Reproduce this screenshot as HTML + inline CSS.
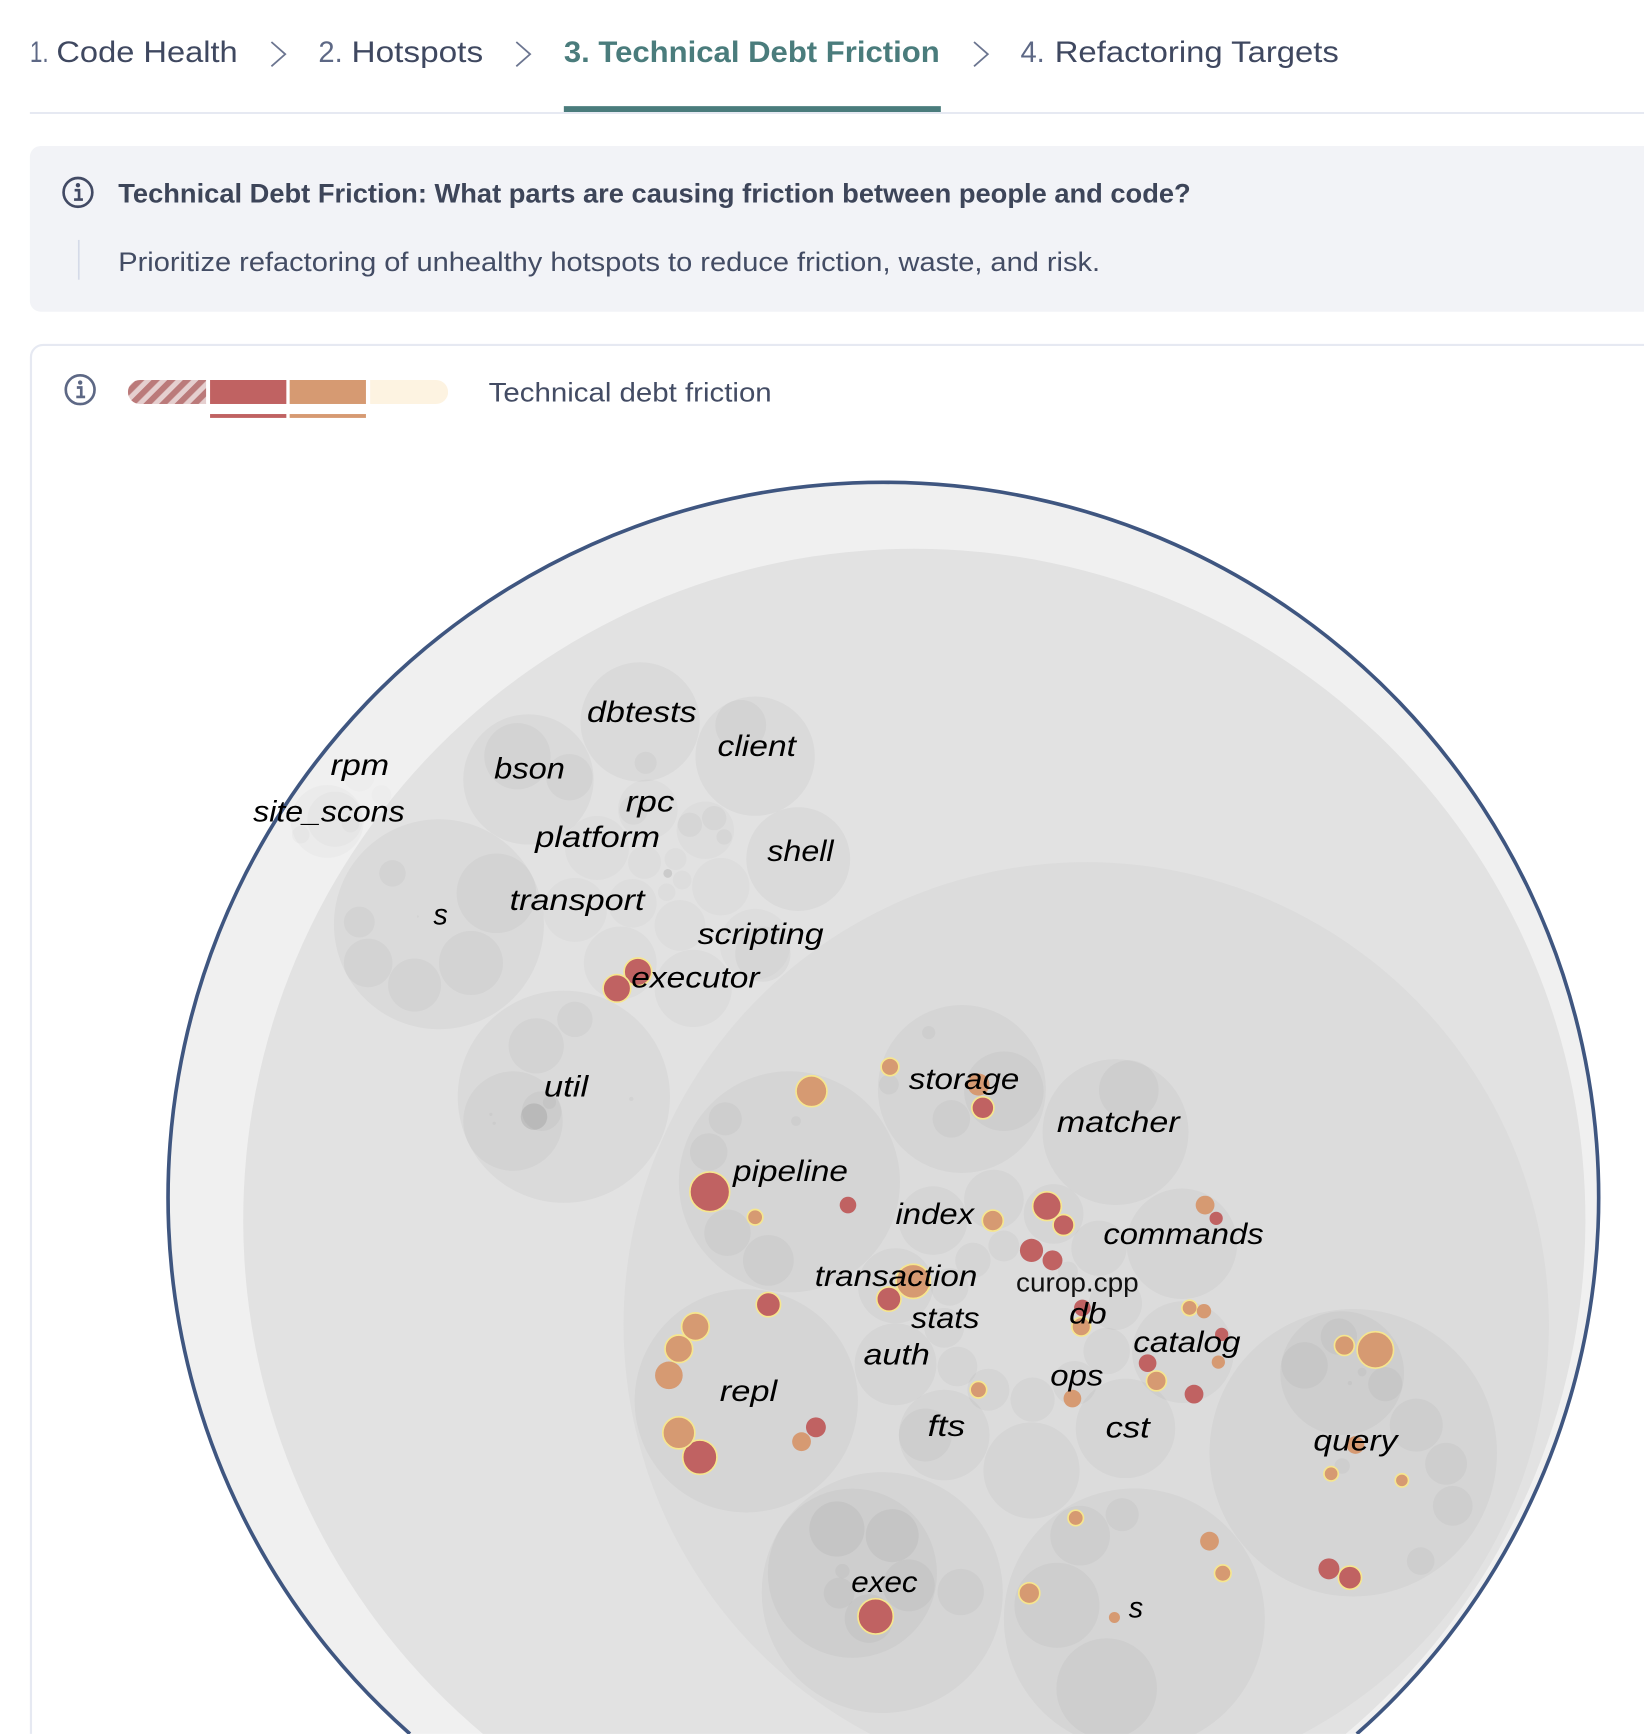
<!DOCTYPE html>
<html lang="en">
<head>
<meta charset="utf-8">
<title>Technical Debt Friction</title>
<style>
html,body{margin:0;padding:0;background:#fff;width:1644px;height:1734px;overflow:hidden}
svg{display:block}
text{font-family:"Liberation Sans",sans-serif}
.t{font-size:27px}
.b{font-size:24px}
.l text{font-size:27px;font-style:italic;fill:#000}
</style>
</head>
<body>
<svg xmlns="http://www.w3.org/2000/svg" width="1644" height="1734" viewBox="0 0 1487 1568.4">
<defs>
<pattern id="h" width="10" height="10" patternUnits="userSpaceOnUse" patternTransform="rotate(45)">
<rect width="10" height="10" fill="#e5cfcf"/><rect width="5.4" height="10" fill="#bb7a7a"/>
</pattern>
<clipPath id="pill"><rect x="115.7" y="343.7" width="289.6" height="21.7" rx="11"/></clipPath>
</defs>

<!-- tabs -->
<g class="t">
<text x="27" y="56" fill="#5d6885" textLength="17" lengthAdjust="spacingAndGlyphs">1.</text>
<text x="51" y="56" fill="#3f4860" textLength="164" lengthAdjust="spacingAndGlyphs">Code Health</text>
<text x="288" y="56" fill="#5d6885" textLength="22" lengthAdjust="spacingAndGlyphs">2.</text>
<text x="318" y="56" fill="#3f4860" textLength="119" lengthAdjust="spacingAndGlyphs">Hotspots</text>
<text x="510" y="56" fill="#4a7c7c" font-weight="700" textLength="340" lengthAdjust="spacingAndGlyphs">3. Technical Debt Friction</text>
<text x="923" y="56" fill="#5d6885" textLength="22" lengthAdjust="spacingAndGlyphs">4.</text>
<text x="954" y="56" fill="#3f4860" textLength="257" lengthAdjust="spacingAndGlyphs">Refactoring Targets</text>
</g>
<g fill="none" stroke="#6b7590" stroke-width="1.6">
<path d="M245.500 38 L258 49 L245.500 60"/>
<path d="M467 38 L479.500 49 L467 60"/>
<path d="M881 38 L893.500 49 L881 60"/>
</g>
<rect x="27" y="101.300" width="1460" height="1.800" fill="#e6e9f2"/>
<rect x="510" y="96" width="341" height="5.300" fill="#4a7c7c"/>

<!-- banner -->
<path d="M37 132H1487V282H37a10 10 0 0 1-10-10V142a10 10 0 0 1 10-10z" fill="#f2f3f7"/>
<circle cx="70.500" cy="174" r="13" fill="none" stroke="#424a64" stroke-width="2.400"/>
<circle cx="70.500" cy="167.500" r="2" fill="#424a64"/>
<path d="M67.500 172H71.500V180M67 180.500H75" fill="none" stroke="#424a64" stroke-width="2.400"/>
<rect x="70.500" y="217" width="1.500" height="36" fill="#d5dae8"/>
<text class="b" x="107" y="183" fill="#3d4559" font-weight="700" textLength="970" lengthAdjust="spacingAndGlyphs">Technical Debt Friction: What parts are causing friction between people and code?</text>
<text class="b" x="107" y="245" fill="#434c64" textLength="888" lengthAdjust="spacingAndGlyphs">Prioritize refactoring of unhealthy hotspots to reduce friction, waste, and risk.</text>

<!-- card -->
<path d="M1487 312H39a11 11 0 0 0-11 11V1568.300" fill="none" stroke="#e6e9f2" stroke-width="2"/>
<circle cx="72.500" cy="352.500" r="13" fill="none" stroke="#5d6885" stroke-width="2.400"/>
<circle cx="72.500" cy="346" r="2" fill="#5d6885"/>
<path d="M69.500 350.500H73.500V358.500M69 359H77" fill="none" stroke="#5d6885" stroke-width="2.400"/>
<g clip-path="url(#pill)">
<rect x="115.700" y="343.700" width="70.700" height="21.700" fill="url(#h)"/>
<rect x="190" y="343.700" width="69" height="21.700" fill="#c06262"/>
<rect x="262" y="343.700" width="69" height="21.700" fill="#d69a72"/>
<rect x="334.800" y="343.700" width="70.500" height="21.700" fill="#fdf3e1"/>
</g>
<rect x="190" y="374.500" width="69" height="3.500" fill="#c06262"/>
<rect x="262" y="374.500" width="69" height="3.500" fill="#d69a72"/>
<text class="b" x="442" y="363" fill="#434c64" textLength="256" lengthAdjust="spacingAndGlyphs">Technical debt friction</text>

<!-- pack -->
<path d="M370.800 1568.300A647 647 0 1 1 1227.200 1568.300Z" fill="#f0f0f0"/>
<path d="M370.800 1568.300A647 647 0 1 1 1227.200 1568.300" fill="none" stroke="#3f5680" stroke-width="3.300"/>
<path d="M436.800 1568.300A607 607 0 1 1 1217.200 1568.300Z" fill="#e2e2e2"/>
<path d="M786.900 1568.300A418.500 418.500 0 1 1 1178.100 1568.300Z" fill="#dcdcdc"/>

<g fill="#000" fill-opacity=".03">
<!-- upper-left -->
<circle cx="296" cy="743" r="33" fill-opacity=".02"/><circle cx="303" cy="741" r="25" fill-opacity=".02"/><circle cx="272" cy="755" r="8" fill-opacity=".02"/><circle cx="317" cy="745" r="8" fill-opacity=".02"/>
<circle cx="325" cy="702" r="14" fill-opacity=".01"/><circle cx="345" cy="719" r="9" fill-opacity=".01"/>
<circle cx="397" cy="836" r="95"/><circle cx="449" cy="808" r="36"/><circle cx="426" cy="871" r="29"/><circle cx="375" cy="891" r="24"/><circle cx="333" cy="871" r="22"/><circle cx="325" cy="834" r="14"/><circle cx="355" cy="790" r="12"/><circle cx="378" cy="829" r="1"/>
<circle cx="478" cy="705" r="59"/><circle cx="468" cy="684" r="30"/><circle cx="515" cy="703" r="21"/>
<circle cx="579" cy="653" r="54"/><circle cx="584" cy="690" r="10"/>
<circle cx="683" cy="684" r="54"/><circle cx="670" cy="656" r="23"/>
<circle cx="586" cy="732" r="27" fill-opacity=".018"/><circle cx="573" cy="733" r="13" fill-opacity=".022"/>
<circle cx="540" cy="767" r="29" fill-opacity=".018"/>
<circle cx="583" cy="780" r="15" fill-opacity=".018"/><circle cx="611" cy="777" r="10" fill-opacity=".018"/><circle cx="617" cy="796" r="8.500" fill-opacity=".018"/><circle cx="603" cy="807" r="8" fill-opacity=".018"/><circle cx="604" cy="790" r="4" fill-opacity=".1"/>
<circle cx="638" cy="751" r="26" fill-opacity=".018"/><circle cx="624" cy="746" r="11"/><circle cx="646" cy="740" r="11"/><circle cx="655" cy="757" r="7"/>
<circle cx="722" cy="777" r="47"/>
<circle cx="652" cy="802" r="26" fill-opacity=".018"/>
<circle cx="520" cy="823" r="29" fill-opacity=".018"/>
<circle cx="572" cy="817" r="22" fill-opacity=".018"/>
<circle cx="615" cy="837" r="23" fill-opacity=".018"/>
<circle cx="683" cy="854" r="32" fill-opacity=".018"/><circle cx="690" cy="863" r="25"/>
<circle cx="561" cy="871" r="33" fill-opacity=".022"/>
<circle cx="627" cy="894" r="35" fill-opacity=".022"/>
<circle cx="510" cy="992" r="96"/><circle cx="464" cy="1014" r="45"/><circle cx="485" cy="946" r="25"/><circle cx="520" cy="922" r="16"/><circle cx="490" cy="1005" r="18"/><circle cx="483" cy="1010" r="12" fill-opacity=".09"/><circle cx="497" cy="997" r="6"/><circle cx="571" cy="994" r="2"/><circle cx="444" cy="1008" r="1.500"/><circle cx="447" cy="1016" r="1.500"/>
<!-- inner -->
<circle cx="870" cy="985" r="76"/><circle cx="908" cy="987" r="36"/><circle cx="860.500" cy="1012" r="17"/><circle cx="840" cy="934" r="6"/><circle cx="804" cy="981" r="9"/>
<circle cx="1009" cy="1024" r="66"/><circle cx="1021" cy="986" r="27"/>
<circle cx="714" cy="1069" r="100"/><circle cx="656" cy="1012" r="15"/><circle cx="641" cy="1042" r="17"/><circle cx="658" cy="1115" r="21"/><circle cx="695" cy="1140" r="23"/><circle cx="720" cy="1014" r="4.500"/>
<circle cx="844" cy="1104" r="31"/><circle cx="899" cy="1085" r="27"/><circle cx="953" cy="1098" r="27"/><circle cx="908" cy="1127" r="14"/><circle cx="880" cy="1140" r="16"/><circle cx="994" cy="1129" r="25"/>
<circle cx="1069" cy="1125" r="50"/>
<circle cx="810" cy="1163" r="34"/><circle cx="859" cy="1164" r="17"/><circle cx="854" cy="1201" r="18"/>
<circle cx="810" cy="1234" r="37"/><circle cx="866" cy="1236" r="18"/><circle cx="894" cy="1257" r="19"/>
<circle cx="854" cy="1298" r="41"/><circle cx="837" cy="1298" r="24"/>
<circle cx="934" cy="1266" r="20"/><circle cx="933" cy="1330" r="43.500"/><circle cx="1018" cy="1292" r="45"/>
<circle cx="972" cy="1251" r="20"/><circle cx="1001" cy="1222" r="21"/><circle cx="1009" cy="1179" r="24"/><circle cx="966" cy="1150" r="9"/>
<circle cx="1070" cy="1223" r="46"/>
<circle cx="675" cy="1267" r="101"/>
<!-- query -->
<circle cx="1224" cy="1314" r="130"/><circle cx="1214" cy="1242" r="56"/><circle cx="1180" cy="1235" r="21"/><circle cx="1211" cy="1209" r="16.500"/><circle cx="1253" cy="1252" r="15.500"/><circle cx="1232" cy="1241" r="4"/><circle cx="1221" cy="1251" r="2"/>
<circle cx="1281" cy="1289" r="24"/><circle cx="1308" cy="1324" r="19"/><circle cx="1314" cy="1362" r="18"/><circle cx="1285" cy="1412" r="12.500"/><circle cx="1214" cy="1326" r="7"/>
<!-- exec -->
<circle cx="798" cy="1440.500" r="109"/><circle cx="771" cy="1423" r="76.500"/><circle cx="757" cy="1383" r="25" fill-opacity=".04"/><circle cx="807" cy="1389" r="24" fill-opacity=".04"/><circle cx="822" cy="1434" r="23.500"/><circle cx="786" cy="1464" r="22"/><circle cx="759" cy="1441" r="14"/><circle cx="762" cy="1421" r="6.500"/><circle cx="869" cy="1440" r="21"/>
<!-- s2 -->
<path d="M970.300 1568.300A118 118 0 1 1 1081.700 1568.300Z"/><circle cx="977" cy="1389" r="27"/><circle cx="1015" cy="1370" r="15"/><circle cx="956" cy="1452" r="38.500"/><path d="M981.300 1568.300A45.500 45.500 0 1 1 1020.700 1568.300Z"/>
</g>

<!-- red, highlighted -->
<g fill="#c06262" stroke="#f6e68e" stroke-width="1.500">
<circle cx="577" cy="879" r="12.500"/><circle cx="558" cy="894" r="12.500"/>
<circle cx="889" cy="1002" r="10"/><circle cx="642" cy="1078" r="18"/>
<circle cx="947" cy="1091" r="13"/><circle cx="962" cy="1108" r="9.500"/>
<circle cx="804" cy="1175" r="11"/><circle cx="695" cy="1180" r="11"/>
<circle cx="633" cy="1318" r="15.500"/><circle cx="1221" cy="1427" r="10.500"/><circle cx="792" cy="1462" r="16"/>
</g>
<!-- red, plain -->
<g fill="#c06262">
<circle cx="767" cy="1090" r="7.500"/><circle cx="933" cy="1131" r="10.500"/><circle cx="952" cy="1140" r="9"/>
<circle cx="1100" cy="1102" r="6"/><circle cx="979" cy="1183" r="7.500"/><circle cx="1105" cy="1207" r="6"/>
<circle cx="1038" cy="1233" r="8"/><circle cx="1080" cy="1261" r="8.500"/><circle cx="738" cy="1291" r="9"/><circle cx="1202" cy="1419" r="9.500"/>
</g>
<!-- orange, highlighted -->
<g fill="#d69a72" stroke="#f6e68e" stroke-width="1.500">
<circle cx="805" cy="965" r="8"/><circle cx="734" cy="987" r="14"/><circle cx="683" cy="1101" r="7"/>
<circle cx="898" cy="1104" r="9.500"/><circle cx="826" cy="1159" r="15.500"/><circle cx="885" cy="1257" r="7.500"/>
<circle cx="978" cy="1200" r="8.500"/><circle cx="1076" cy="1183" r="7"/><circle cx="1046" cy="1249" r="9"/>
<circle cx="629" cy="1200" r="12.500"/><circle cx="614" cy="1220" r="12.500"/><circle cx="614" cy="1296" r="14.500"/>
<circle cx="1244" cy="1221" r="16.500"/><circle cx="1216" cy="1217" r="9"/><circle cx="1204" cy="1333" r="6.500"/><circle cx="1268" cy="1339" r="6"/>
<circle cx="973" cy="1373" r="7"/><circle cx="1106" cy="1423" r="7.500"/><circle cx="931" cy="1441" r="9.500"/>
</g>
<!-- orange, plain -->
<g fill="#d69a72">
<circle cx="885" cy="981" r="10"/><circle cx="1090" cy="1090" r="8.500"/><circle cx="970" cy="1265" r="8"/>
<circle cx="1089" cy="1186" r="6.500"/><circle cx="1102" cy="1232" r="6"/><circle cx="605" cy="1244" r="12.500"/>
<circle cx="725" cy="1304" r="8.500"/><circle cx="1226" cy="1307" r="8"/><circle cx="1094" cy="1394" r="8.500"/><circle cx="1008" cy="1463" r="5"/>
</g>

<!-- labels -->
<g class="l">
<text x="299" y="701" textLength="53" lengthAdjust="spacingAndGlyphs">rpm</text>
<text x="229" y="743" textLength="137" lengthAdjust="spacingAndGlyphs">site_scons</text>
<text x="531" y="653" textLength="99" lengthAdjust="spacingAndGlyphs">dbtests</text>
<text x="649" y="684" textLength="71" lengthAdjust="spacingAndGlyphs">client</text>
<text x="447" y="704" textLength="64" lengthAdjust="spacingAndGlyphs">bson</text>
<text x="566" y="734" textLength="44" lengthAdjust="spacingAndGlyphs">rpc</text>
<text x="484" y="766" textLength="113" lengthAdjust="spacingAndGlyphs">platform</text>
<text x="694" y="779" textLength="60" lengthAdjust="spacingAndGlyphs">shell</text>
<text x="392" y="836" textLength="13" lengthAdjust="spacingAndGlyphs">s</text>
<text x="461" y="823" textLength="122" lengthAdjust="spacingAndGlyphs">transport</text>
<text x="631" y="854" textLength="114" lengthAdjust="spacingAndGlyphs">scripting</text>
<text x="571" y="893" textLength="116" lengthAdjust="spacingAndGlyphs">executor</text>
<text x="492" y="992" textLength="40" lengthAdjust="spacingAndGlyphs">util</text>
<text x="822" y="985" textLength="100" lengthAdjust="spacingAndGlyphs">storage</text>
<text x="956" y="1024" textLength="111" lengthAdjust="spacingAndGlyphs">matcher</text>
<text x="663" y="1068" textLength="104" lengthAdjust="spacingAndGlyphs">pipeline</text>
<text x="810" y="1107" textLength="71" lengthAdjust="spacingAndGlyphs">index</text>
<text x="998" y="1125" textLength="145" lengthAdjust="spacingAndGlyphs">commands</text>
<text x="737" y="1163" textLength="147" lengthAdjust="spacingAndGlyphs">transaction</text>
<text x="824" y="1201" textLength="62" lengthAdjust="spacingAndGlyphs">stats</text>
<text x="967" y="1197" textLength="34" lengthAdjust="spacingAndGlyphs">db</text>
<text x="1025" y="1223" textLength="97" lengthAdjust="spacingAndGlyphs">catalog</text>
<text x="781" y="1234" textLength="60" lengthAdjust="spacingAndGlyphs">auth</text>
<text x="950" y="1253" textLength="48" lengthAdjust="spacingAndGlyphs">ops</text>
<text x="651" y="1267" textLength="52" lengthAdjust="spacingAndGlyphs">repl</text>
<text x="839" y="1299" textLength="34" lengthAdjust="spacingAndGlyphs">fts</text>
<text x="1000" y="1300" textLength="40" lengthAdjust="spacingAndGlyphs">cst</text>
<text x="1188" y="1312" textLength="76" lengthAdjust="spacingAndGlyphs">query</text>
<text x="770" y="1440" textLength="60" lengthAdjust="spacingAndGlyphs">exec</text>
<text x="1021" y="1463" textLength="13" lengthAdjust="spacingAndGlyphs">s</text>
</g>
<text x="919" y="1168" font-size="24" fill="#111" textLength="111" lengthAdjust="spacingAndGlyphs">curop.cpp</text>
</svg>
</body>
</html>
